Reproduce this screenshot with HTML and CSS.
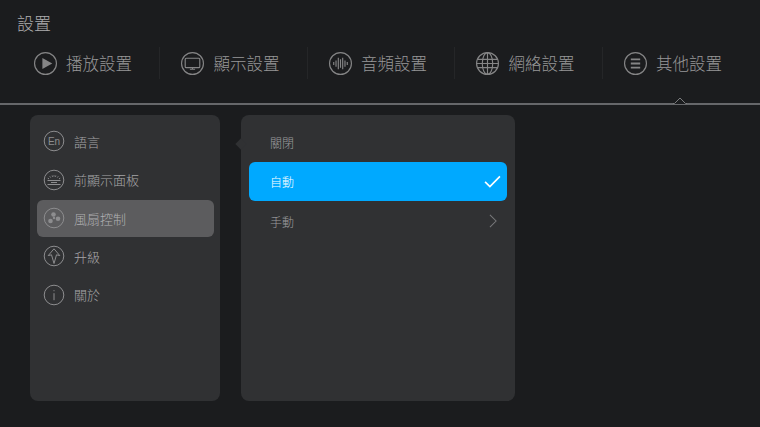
FILE: index.html
```html
<!DOCTYPE html>
<html lang="zh-Hant">
<head>
<meta charset="utf-8">
<title>設置</title>
<link rel="stylesheet" href="styles.css">
</head>
<body>
<header class="top">
  <h1 class="title">設置</h1>
  <nav class="tabs">
    <div class="tab">
      <svg class="tab-icon" viewBox="0 0 24 24"><circle cx="12" cy="12" r="10.5"/><path class="fill" d="M9 6.700v10.600l9.500-5.300z"/></svg>
      <span>播放設置</span>
    </div>
    <div class="tab">
      <svg class="tab-icon" viewBox="0 0 24 24"><circle cx="12" cy="12" r="10.5"/><rect x="5" y="7" width="14" height="9" rx="1"/><path d="M9.500 17.500h5M12 16v1.500"/></svg>
      <span>顯示設置</span>
    </div>
    <div class="tab">
      <svg class="tab-icon" viewBox="0 0 24 24"><circle cx="12" cy="12" r="10.5"/><path d="M5.500 10.500v3M7.700 9v6M9.900 6.500v11M12 8v8M14.100 6.500v11M16.300 9v6M18.500 10.500v3"/></svg>
      <span>音頻設置</span>
    </div>
    <div class="tab">
      <svg class="tab-icon" viewBox="0 0 24 24"><circle cx="12" cy="12" r="10.5"/><ellipse cx="12" cy="12" rx="5" ry="10.5"/><path d="M12 1.500v21M2.300 8h19.400M2.300 16h19.400M1.500 12h21"/></svg>
      <span>網絡設置</span>
    </div>
    <div class="tab">
      <svg class="tab-icon" viewBox="0 0 24 24"><circle cx="12" cy="12" r="10.5"/><path class="thick" d="M7.500 8h9M7.500 12h9M7.500 16h9"/></svg>
      <span>其他設置</span>
    </div>
  </nav>
  <div class="rule">
    <svg class="notch" viewBox="0 0 14 7"><path d="M0 6.500h1.500L7 1l5.500 5.500H14"/></svg>
  </div>
</header>
<main class="panels">
  <section class="panel menu">
    <div class="row">
      <svg class="row-icon" viewBox="0 0 22 22"><circle cx="11" cy="11" r="9.800"/><text class="en" x="11" y="14.600" text-anchor="middle">En</text></svg>
      <span>語言</span>
    </div>
    <div class="row">
      <svg class="row-icon" viewBox="0 0 22 22"><circle cx="11" cy="11" r="9.800"/><path d="M4.800 9.200 6 9.900M6.800 7.400 7.600 8.500M9.200 6.500 9.500 7.800M11 6.300v1.300M12.800 6.500 12.500 7.800M15.200 7.400 14.400 8.500M17.200 9.200 16 9.900"/><path class="thick" d="M4.500 11.500h13M8 13.500h6M4.500 15.500h13"/></svg>
      <span>前顯示面板</span>
    </div>
    <div class="row active">
      <svg class="row-icon" viewBox="0 0 22 22"><circle cx="11" cy="11" r="9.800"/><circle class="fill" cx="10.500" cy="7.500" r="2.300"/><circle class="fill" cx="15" cy="11.800" r="2.300"/><circle class="fill" cx="7.500" cy="14" r="2.300"/><circle class="fill" cx="11" cy="11" r="1.200"/></svg>
      <span>風扇控制</span>
    </div>
    <div class="row">
      <svg class="row-icon" viewBox="0 0 22 22"><circle cx="11" cy="11" r="9.800"/><path d="M11 3.800 16.800 10.600 13.500 9.800 11 18.500 8.500 9.800 5.200 10.600z"/></svg>
      <span>升級</span>
    </div>
    <div class="row">
      <svg class="row-icon" viewBox="0 0 22 22"><circle cx="11" cy="11" r="9.800"/><path d="M11 9.200v7M11 6.200v1"/></svg>
      <span>關於</span>
    </div>
  </section>
  <section class="panel options">
    <span class="pointer"></span>
    <div class="option">關閉</div>
    <div class="option selected">
      <span>自動</span>
      <svg class="check" viewBox="0 0 18 14"><path d="M1 7.500 6.200 12.500 17 1.500"/></svg>
    </div>
    <div class="option lower">
      <span>手動</span>
      <svg class="chevron" viewBox="0 0 9 16"><path d="M1 1l7 7-7 7"/></svg>
    </div>
  </section>
</main>
</body>
</html>
```
FILE: styles.css
```css
* { box-sizing: border-box; }
html, body { margin: 0; height: 100%; }
body {
  width: 760px;
  height: 427px;
  overflow: hidden;
  background: #1b1c1e;
  font-family: "Noto Sans CJK TC", "Noto Sans CJK SC", "Liberation Sans", sans-serif;
  font-weight: 300;
}
.top { height: 115px; padding-top: 11px; }
.title {
  margin: 0 0 0 17px;
  height: 24px;
  line-height: 24px;
  font-size: 17px;
  font-weight: 300;
  color: #adadae;
}
.tabs {
  display: flex;
  height: 32px;
  margin-top: 12px;
  padding-left: 12.500px;
}
.tab {
  width: 147.500px;
  display: flex;
  align-items: center;
  gap: 8.500px;
  padding-left: 20px;
  border-right: 1px solid #252628;
  font-size: 16.500px;
  color: #979798;
}
.tab:last-child { border-right: 0; }
.tab-icon {
  width: 25px;
  height: 25px;
  flex: none;
  fill: none;
  stroke: #858586;
  stroke-width: 1.100;
}
.tab-icon .fill { fill: #858586; stroke: none; }
.tab-icon .thick { stroke-width: 1.700; }
.rule {
  position: relative;
  height: 2px;
  margin-top: 24px;
  background: #66676a;
}
.notch {
  position: absolute;
  left: 673px;
  top: -6px;
  width: 14px;
  height: 7px;
  fill: none;
  stroke: #7a7b7d;
  stroke-width: 1;
  background: #1b1c1e;
}
.panels {
  display: flex;
  gap: 21px;
  padding-left: 30px;
}
.panel {
  position: relative;
  height: 286px;
  border-radius: 8px;
  background: #303133;
}
.menu { width: 190px; padding: 7px 6px 7px 7px; }
.row {
  display: flex;
  align-items: center;
  gap: 9px;
  height: 38.500px;
  padding-left: 6px;
  border-radius: 6px;
  font-size: 13px;
  color: #a5a5a7;
}
.row.active { background: #5c5c5e; height: 37px; margin: 1px 0 0; padding-bottom: 1px; color: #b0b0b2; }
.row-icon {
  width: 22px;
  height: 22px;
  flex: none;
  fill: none;
  stroke: #8d8d8f;
  stroke-width: 1;
}
.row-icon .fill { fill: #8d8d8f; stroke: none; }
.row-icon .thick { stroke-width: 1; }
.row-icon .en {
  font-family: "Liberation Sans", sans-serif;
  font-size: 10px;
  fill: #8d8d8f;
  stroke: none;
}
.options { width: 274px; padding: 8px; }
.pointer {
  position: absolute;
  left: -4px;
  top: 25px;
  width: 8px;
  height: 8px;
  background: #303133;
  transform: rotate(45deg);
}
.option {
  display: flex;
  align-items: center;
  justify-content: space-between;
  height: 39px;
  padding: 0 10px 0 21px;
  border-radius: 6px;
  font-size: 12px;
  color: #9c9c9e;
}
.option.lower { padding-top: 1px; }
.option.selected { background: #00a9ff; color: #fff; padding-right: 6px; }
.check {
  width: 17px;
  height: 13px;
  fill: none;
  stroke: #fff;
  stroke-width: 1.800;
}
.chevron {
  width: 8px;
  height: 14px;
  fill: none;
  stroke: #77787a;
  stroke-width: 1.200;
}
```
